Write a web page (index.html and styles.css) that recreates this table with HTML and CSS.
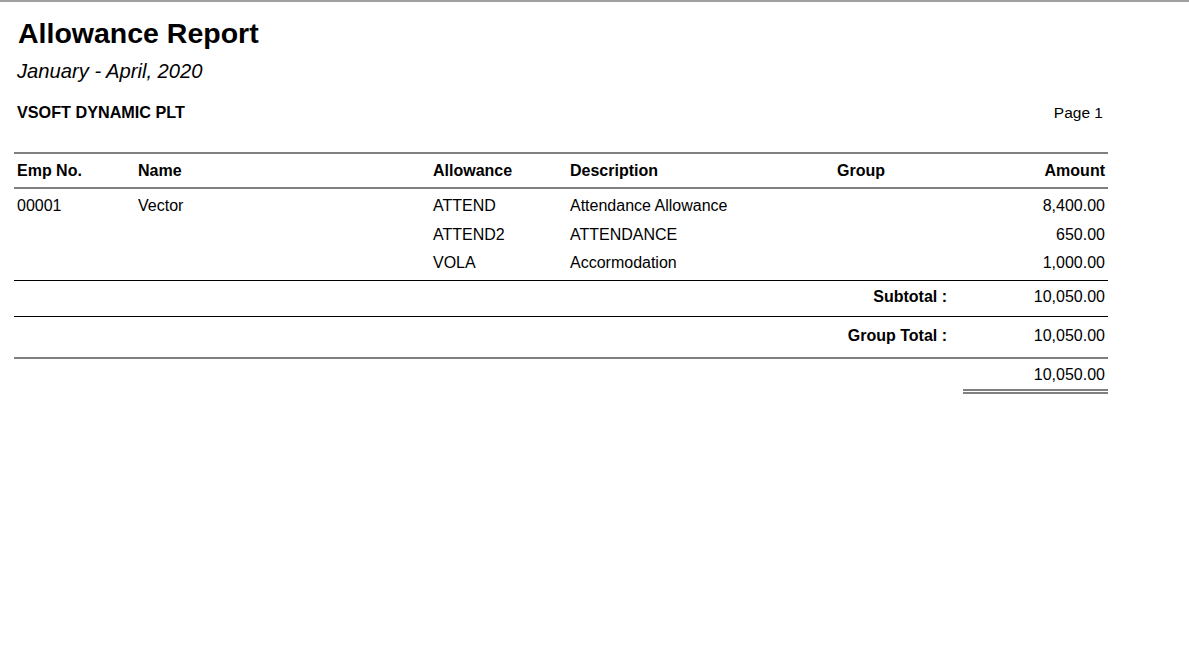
FILE: index.html
```html
<!DOCTYPE html>
<html lang="en">
<head>
<meta charset="utf-8">
<title>Allowance Report</title>
<link rel="stylesheet" href="styles.css">
</head>
<body>
<div class="page">
  <div class="report">
    <h1 class="title">Allowance Report</h1>
    <div class="period">January - April, 2020</div>
    <div class="company-row">
      <span class="company">VSOFT DYNAMIC PLT</span>
      <span class="page-no">Page 1</span>
    </div>
    <table class="grid">
      <colgroup>
        <col class="c-emp">
        <col class="c-name">
        <col class="c-allow">
        <col class="c-desc">
        <col class="c-group">
        <col class="c-amt">
      </colgroup>
      <thead>
        <tr>
          <th>Emp No.</th>
          <th>Name</th>
          <th>Allowance</th>
          <th>Description</th>
          <th>Group</th>
          <th class="num">Amount</th>
        </tr>
      </thead>
      <tbody>
        <tr class="row">
          <td>00001</td>
          <td>Vector</td>
          <td>ATTEND</td>
          <td>Attendance Allowance</td>
          <td></td>
          <td class="num">8,400.00</td>
        </tr>
        <tr class="row">
          <td></td>
          <td></td>
          <td>ATTEND2</td>
          <td>ATTENDANCE</td>
          <td></td>
          <td class="num">650.00</td>
        </tr>
        <tr class="row last">
          <td></td>
          <td></td>
          <td>VOLA</td>
          <td>Accormodation</td>
          <td></td>
          <td class="num">1,000.00</td>
        </tr>
        <tr class="subtotal">
          <td colspan="5" class="label">Subtotal :</td>
          <td class="num">10,050.00</td>
        </tr>
        <tr class="grouptotal">
          <td colspan="5" class="label">Group Total :</td>
          <td class="num">10,050.00</td>
        </tr>
        <tr class="grandtotal">
          <td colspan="5"></td>
          <td class="num final">10,050.00</td>
        </tr>
      </tbody>
    </table>
  </div>
</div>
</body>
</html>
```
FILE: styles.css
```css
html, body {
  margin: 0;
  padding: 0;
  background: #ffffff;
}

body {
  font-family: "Liberation Sans", Arial, sans-serif;
  color: #000000;
}

.page {
  border-top: 2px solid #a0a0a0;
  min-height: 648px;
}

.report {
  padding: 15px 0 0 14px;
  width: 1094px;
}

.title {
  margin: 0;
  padding-left: 4px;
  font-size: 28.5px;
  line-height: 32px;
  font-weight: bold;
}

.period {
  margin-top: 10px;
  padding-left: 3px;
  font-size: 20.2px;
  line-height: 24px;
  font-style: italic;
}

.company-row {
  margin-top: 20px;
  display: flex;
  justify-content: space-between;
  align-items: baseline;
  padding: 0 5px 0 3px;
  font-size: 16px;
  line-height: 18px;
}

.company {
  font-weight: bold;
  font-size: 16.2px;
}

.page-no {
  font-size: 15.5px;
}

.grid {
  margin-top: 30px;
  width: 1094px;
  table-layout: fixed;
  border-collapse: separate;
  border-spacing: 0;
  font-size: 16px;
  line-height: 18px;
}

.c-emp { width: 121px; }
.c-name { width: 295px; }
.c-allow { width: 137px; }
.c-desc { width: 267px; }
.c-group { width: 129px; }
.c-amt { width: 145px; }

.grid th,
.grid td {
  padding: 0 3px;
  text-align: left;
  white-space: nowrap;
  vertical-align: top;
}

.grid th {
  font-weight: bold;
  padding-top: 8px;
  padding-bottom: 7px;
  border-top: 2px solid #808080;
  border-bottom: 2px solid #808080;
}

.grid .num {
  text-align: right;
}

.row td {
  padding-top: 8px;
  padding-bottom: 2.5px;
}

.row.last td {
  padding-bottom: 8px;
}

.subtotal td {
  border-top: 1px solid #000000;
  padding-top: 7px;
  padding-bottom: 10px;
}

.grouptotal td {
  border-top: 1px solid #000000;
  padding-top: 10px;
  padding-bottom: 12px;
}

.grid .label {
  text-align: right;
  font-weight: bold;
  padding-right: 16px;
}

.grandtotal td {
  border-top: 2px solid #808080;
  padding-top: 7px;
  padding-bottom: 5px;
}

.grandtotal td.final {
  border-bottom: 5px double #808080;
}
```
